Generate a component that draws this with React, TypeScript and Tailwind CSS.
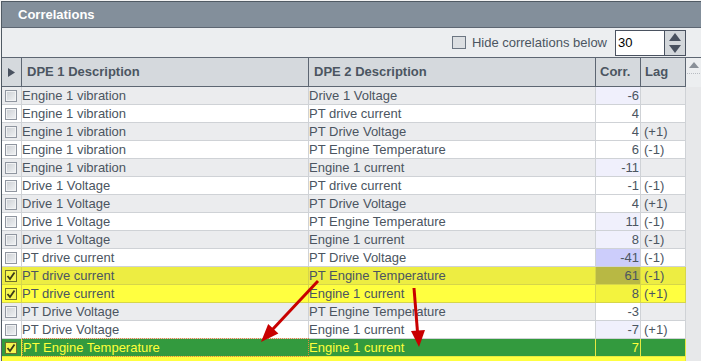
import React from "react";

type Row = {
  checked: boolean;
  a: string;
  b: string;
  corr: string;
  lag: string;
  rowCls: string;
  corrCls: string;
  lineCls: string;
  textCls: string;
  focus?: boolean;
};

const gray = "bg-[#ebecee]";
const white = "bg-white";
const lav = "bg-[#f0f0fc]";
const line = "border-[#cfd2d6]";
const txt = "text-[#4b5561]";

const rows: Row[] = [
  { checked: false, a: "Engine 1 vibration", b: "Drive 1 Voltage", corr: "-6", lag: "", rowCls: gray, corrCls: lav, lineCls: line, textCls: txt },
  { checked: false, a: "Engine 1 vibration", b: "PT drive current", corr: "4", lag: "", rowCls: white, corrCls: white, lineCls: line, textCls: txt },
  { checked: false, a: "Engine 1 vibration", b: "PT Drive Voltage", corr: "4", lag: "(+1)", rowCls: gray, corrCls: white, lineCls: line, textCls: txt },
  { checked: false, a: "Engine 1 vibration", b: "PT Engine Temperature", corr: "6", lag: "(-1)", rowCls: white, corrCls: white, lineCls: line, textCls: txt },
  { checked: false, a: "Engine 1 vibration", b: "Engine 1 current", corr: "-11", lag: "", rowCls: gray, corrCls: lav, lineCls: line, textCls: txt },
  { checked: false, a: "Drive 1 Voltage", b: "PT drive current", corr: "-1", lag: "(-1)", rowCls: white, corrCls: white, lineCls: line, textCls: txt },
  { checked: false, a: "Drive 1 Voltage", b: "PT Drive Voltage", corr: "4", lag: "(+1)", rowCls: gray, corrCls: white, lineCls: line, textCls: txt },
  { checked: false, a: "Drive 1 Voltage", b: "PT Engine Temperature", corr: "11", lag: "(-1)", rowCls: white, corrCls: lav, lineCls: line, textCls: txt },
  { checked: false, a: "Drive 1 Voltage", b: "Engine 1 current", corr: "8", lag: "(-1)", rowCls: gray, corrCls: lav, lineCls: line, textCls: txt },
  { checked: false, a: "PT drive current", b: "PT Drive Voltage", corr: "-41", lag: "(-1)", rowCls: white, corrCls: "bg-[#cccdfb]", lineCls: line, textCls: txt },
  { checked: true, a: "PT drive current", b: "PT Engine Temperature", corr: "61", lag: "(-1)", rowCls: "bg-[#eded42]", corrCls: "bg-[#b8b844]", lineCls: "border-[#d6d64a]", textCls: txt },
  { checked: true, a: "PT drive current", b: "Engine 1 current", corr: "8", lag: "(+1)", rowCls: "bg-[#ffff40]", corrCls: "bg-[#f3f33e]", lineCls: "border-[#d6d64a]", textCls: txt },
  { checked: false, a: "PT Drive Voltage", b: "PT Engine Temperature", corr: "-3", lag: "", rowCls: gray, corrCls: white, lineCls: line, textCls: txt },
  { checked: false, a: "PT Drive Voltage", b: "Engine 1 current", corr: "-7", lag: "(+1)", rowCls: white, corrCls: lav, lineCls: line, textCls: txt },
  { checked: true, a: "PT Engine Temperature", b: "Engine 1 current", corr: "7", lag: "", rowCls: "bg-[#339a3e]", corrCls: "bg-[#339a3e]", lineCls: "border-[#e8e840]", textCls: "text-[#ffff3a]", focus: true },
];

function Check({ checked }: { checked: boolean }) {
  if (checked) {
    return (
      <div className="w-[12px] h-[12px] border border-[#6f6f2a] bg-[#f6f650] flex items-center justify-center">
        <svg width="10" height="10" viewBox="0 0 10 10">
          <path d="M1.5 5 L4 8 L8.5 1.5" fill="none" stroke="#3a3a1a" strokeWidth="1.8" />
        </svg>
      </div>
    );
  }
  return (
    <div className="w-[12px] h-[12px] border border-[#9096a0] bg-[#f2f3f4] p-px">
      <div className="w-full h-full bg-gradient-to-br from-[#cfd2d6] to-[#eef0f2]" />
    </div>
  );
}

export default function App() {
  return (
    <div className="relative w-[701px] h-[361px] overflow-hidden bg-[#f4f4f4] pt-px pl-px font-['Liberation_Sans',Arial,sans-serif]">
      <div className="h-[360px] border-l border-t border-[#505a64] flex flex-col">
        {/* Title */}
        <div className="h-[26px] shrink-0 bg-[#838f9b] border-b border-[#5d6672] flex items-center pl-[16px] text-white font-bold text-[13px]">
          Correlations
        </div>
        {/* Toolbar */}
        <div className="h-[29px] shrink-0 bg-[#eceef0] flex items-center justify-end pr-[15px]">
          <div className="w-[14px] h-[13px] border border-[#6c7682] bg-[#dcdfe2] mr-[6px]" />
          <span className="text-[13px] text-[#4b5561] mr-[8px]">Hide correlations below</span>
          <div className="flex h-[26px]">
            <div className="w-[50px] h-[26px] border border-[#4a5260] bg-white flex items-center pl-[2px] text-[13px] text-black">
              30
            </div>
            <div className="w-[21px] h-[26px] border-t border-b border-r border-[#4a5260] bg-[#d3d7db] flex flex-col items-center justify-center gap-[4px]">
              <svg width="12" height="8" viewBox="0 0 12 8">
                <path d="M6 0 L12 8 L0 8 Z" fill="#4a5260" />
              </svg>
              <svg width="12" height="8" viewBox="0 0 12 8">
                <path d="M0 0 L12 0 L6 8 Z" fill="#4a5260" />
              </svg>
            </div>
          </div>
        </div>
        {/* Header */}
        <div className="h-[30px] shrink-0 flex border-t border-[#5d6672]">
          <div className="w-[684px] flex bg-[#d5d9dd] border-b border-[#5d6672] text-[13px] font-bold text-[#4b5561]">
            <div className="w-[20px] border-r border-[#5d6672] flex items-center justify-center">
              <svg width="9" height="9" viewBox="0 0 9 9">
                <path d="M1 0 L8 4.5 L1 9 Z" fill="#4a5260" />
              </svg>
            </div>
            <div className="w-[287px] border-r border-[#5d6672] flex items-center pl-[5px]">DPE 1 Description</div>
            <div className="w-[287px] border-r border-[#5d6672] flex items-center pl-[5px]">DPE 2 Description</div>
            <div className="w-[45px] border-r border-[#5d6672] flex items-center pl-[4px]">Corr.</div>
            <div className="w-[45px] border-r border-[#5d6672] flex items-center pl-[4px]">Lag</div>
          </div>
          <div className="w-[15px] bg-[#eceef0] flex flex-col items-center pt-[4px]">
            <svg width="10" height="6" viewBox="0 0 10 6">
              <path d="M5 0 L10 6 L0 6 Z" fill="#8a9098" />
            </svg>
            <div className="w-[13px] mt-[5px] border-t border-dotted border-[#b8bcc2]" />
          </div>
        </div>
        {/* Body */}
        <div className="flex flex-1 min-h-0">
          <div className="w-[684px] flex flex-col">
            {rows.map((r, i) => (
              <div key={i} className={`h-[18px] shrink-0 flex border-b ${r.lineCls} ${r.rowCls} ${r.textCls} text-[13px]`}>
                <div className={`w-[20px] border-r ${r.lineCls} flex items-center pl-[3px]`}>
                  <Check checked={r.checked} />
                </div>
                <div className={`w-[287px] border-r ${r.focus ? "border-[#e08a3a] border-dotted border-t border-b border-l -mt-px -mb-px h-[19px]" : r.lineCls} flex items-center whitespace-nowrap`}>
                  {r.a}
                </div>
                <div className={`w-[287px] border-r ${r.lineCls} flex items-center whitespace-nowrap`}>{r.b}</div>
                <div className={`w-[45px] border-r ${r.lineCls} ${r.corrCls} flex items-center justify-end pr-[1px]`}>{r.corr}</div>
                <div className={`w-[45px] border-r ${r.lineCls} flex items-center pl-[3px]`}>{r.lag}</div>
              </div>
            ))}
            <div className="h-[18px] shrink-0 bg-[#ffff40] flex border-r border-[#e8e840]" />
          </div>
          <div className="w-[15px] bg-[#e7e8ea]" />
        </div>
      </div>
      {/* Red arrows */}
      <svg className="absolute left-0 top-0 pointer-events-none" width="701" height="361" viewBox="0 0 701 361">
        <line x1="318" y1="281" x2="272" y2="330" stroke="#c80000" strokeWidth="3" />
        <path d="M261 342 L278.4 333.6 L268.2 324 Z" fill="#c80000" />
        <line x1="414" y1="288" x2="417.5" y2="332" stroke="#c80000" strokeWidth="3" />
        <path d="M419 347 L425 330 L411 331 Z" fill="#c80000" />
      </svg>
    </div>
  );
}
